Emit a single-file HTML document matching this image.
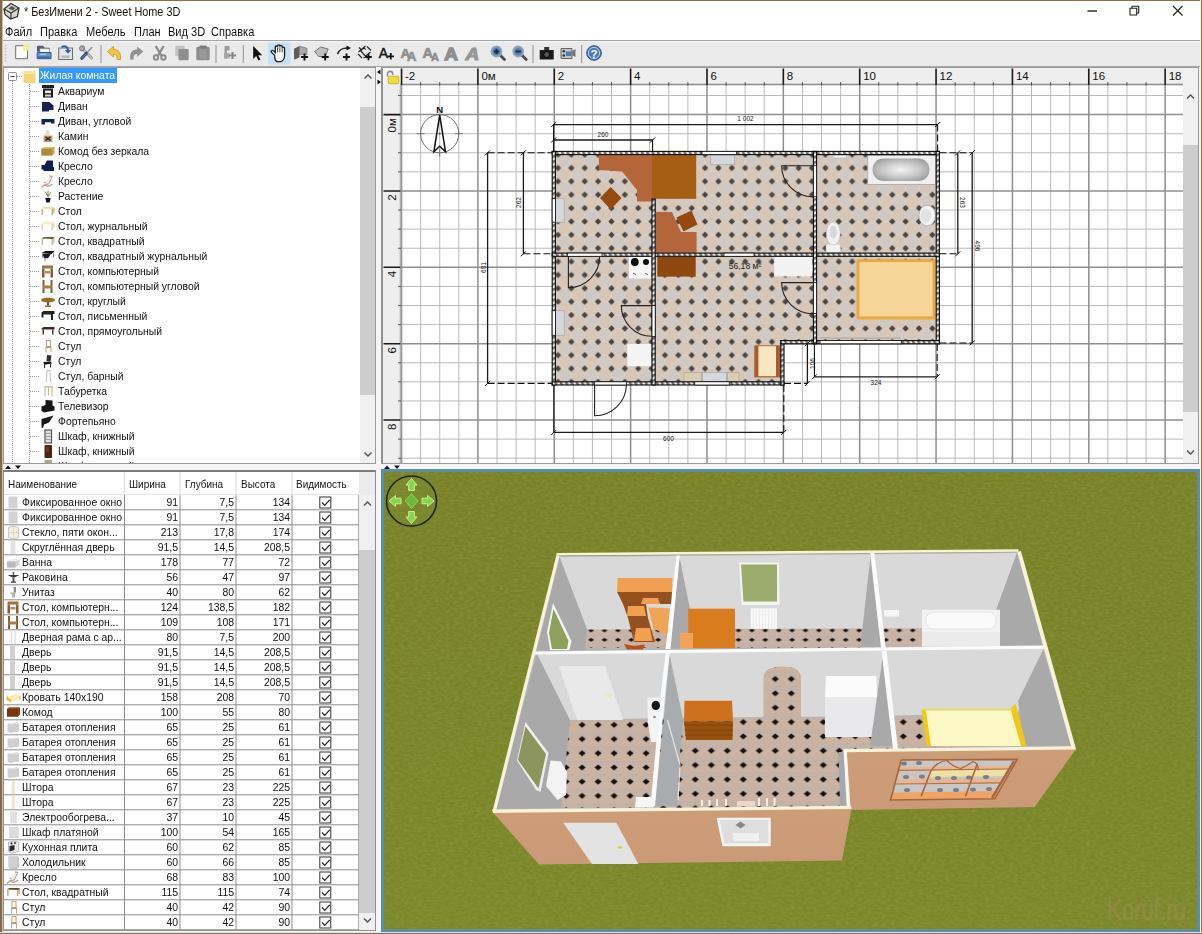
<!DOCTYPE html>
<html lang="ru"><head><meta charset="utf-8"><title>* БезИмени 2 - Sweet Home 3D</title>
<style>

html,body{margin:0;padding:0;}
body{width:1202px;height:934px;overflow:hidden;background:#f0f0f0;font-family:"Liberation Sans",sans-serif;font-size:11px;color:#000;}
#win{position:absolute;left:0;top:0;width:1202px;height:934px;overflow:hidden;background:#f5f5f5;}
.abs{position:absolute;}
#titlebar{position:absolute;left:0;top:0;width:1202px;height:22px;background:#fff;}
#title{position:absolute;left:24px;top:4px;font-size:12px;line-height:16px;white-space:nowrap;color:#111;transform:scaleX(.905);transform-origin:0 0;}
#menubar{position:absolute;left:0;top:22px;width:1202px;height:18px;background:#fff;}
#menubar span{position:absolute;top:2px;font-size:12px;line-height:16px;white-space:nowrap;color:#111;transform:scaleX(.92);transform-origin:0 0;}
#toolbar{position:absolute;left:0;top:40px;width:1202px;height:27px;background:#eaeaea;border-top:1px solid #a4a4a4;box-sizing:border-box;box-shadow:inset 0 1px 0 #f6f6f6;}
#tbsvg{position:absolute;left:0;top:41px;}
#tbsvg text{font-family:"Liberation Sans",sans-serif;}

#tree{position:absolute;left:3px;top:67px;width:373px;height:397px;background:#fff;border:1px solid #9a9a9a;box-sizing:border-box;overflow:hidden;}
.trow{position:absolute;left:54px;height:15px;line-height:15px;font-size:11px;white-space:nowrap;color:#111;transform:scaleX(.945);transform-origin:0 0;}
#tsel{position:absolute;left:35px;top:0px;width:78px;height:15px;background:#3399ff;}
#tselt{position:absolute;left:36px;top:0px;height:15px;color:#fff;line-height:15px;font-size:11px;white-space:nowrap;transform:scaleX(.945);transform-origin:0 0;}
#tsb{position:absolute;left:356px;top:0;width:16px;height:395px;background:#f0f0f0;}
#tsbthumb{position:absolute;left:0;top:39px;width:16px;height:288px;background:#cdcdcd;}
#treesvg{position:absolute;left:0;top:0;}

#tbl{position:absolute;left:3px;top:470px;width:373px;height:461px;background:#fff;border:1px solid #8e8e8e;border-top:2px solid #7c7c7c;box-sizing:border-box;overflow:hidden;}
#tblsvg{position:absolute;left:0;top:-1px;}
.th{position:absolute;top:5px;height:15px;line-height:15px;font-size:11px;white-space:nowrap;color:#111;transform:scaleX(.905);transform-origin:0 0;}
.tn{position:absolute;left:18px;height:15px;line-height:15px;font-size:11px;white-space:nowrap;color:#111;transform:scaleX(.945);transform-origin:0 0;}
.tv{position:absolute;height:15px;line-height:15px;font-size:11px;white-space:nowrap;color:#111;text-align:right;width:54px;transform:scaleX(.945);transform-origin:100% 0;}
#tbsb{position:absolute;left:355px;top:23px;width:17px;height:436px;background:#f0f0f0;}
#tbcorner{position:absolute;left:355px;top:0;width:17px;height:23px;background:#ececec;}
#tbsbthumb{position:absolute;left:0;top:55px;width:17px;height:363px;background:#cdcdcd;}

#plan{position:absolute;left:381px;top:67px;width:818px;height:397px;background:#fff;border:1px solid #9a9a9a;border-left:2px solid #909090;box-sizing:border-box;overflow:hidden;}
#plansvg{position:absolute;left:0;top:0;}
#plansvg text{font-family:"Liberation Sans",sans-serif;}

#v3d{position:absolute;left:381px;top:469px;width:819px;height:463px;background:#7d8a2a;overflow:hidden;}
#v3dsvg{position:absolute;left:0;top:0;}
#v3dsvg text{font-family:"Liberation Sans",sans-serif;}

</style></head>
<body>
<div id="win">
<div id="titlebar"><div id="title">* БезИмени 2 - Sweet Home 3D</div></div>
<svg class="abs" style="left:0;top:0" width="1202" height="22" viewBox="0 0 1202 22"><path d="M4 9l7-5.5 8 4.5-1.5 8.5-7 2.5-5.5-4.5z" fill="#d8d8d0" stroke="#333" stroke-width="1.3"/><path d="M4 9l7 4 8-5M11 13v6" stroke="#333" stroke-width="1.2" fill="none"/><path d="M11.5 6l4 2-3 2.5-4-2z" fill="#555"/><path d="M1087.5 11h9.5" stroke="#222" stroke-width="1.4"/><path d="M1130 8.3h6.7v6.7h-6.7zM1132 8.3v-2h6.7v6.7h-2" stroke="#222" stroke-width="1.1" fill="none"/><path d="M1173 6l9.5 9.5M1182.5 6l-9.5 9.5" stroke="#222" stroke-width="1.2" fill="none"/></svg>
<div id="menubar"><span style="left:5px">Файл</span><span style="left:40px">Правка</span><span style="left:86px">Мебель</span><span style="left:134px">План</span><span style="left:168px">Вид 3D</span><span style="left:211px">Справка</span></div>
<div id="toolbar"></div>
<svg id="tbsvg" width="1202" height="26" viewBox="0 0 1202 26"><g transform="translate(13.7 4)"><path d="M2 0.7h11.8v13h-11.8z" fill="#fdfdfd" stroke="#6e6e6e" stroke-width="1"/><path d="M9.5 0h5.3v5.5h-5.3z" fill="#f7ea78"/><path d="M12 0.3v5M9.7 2.7h5" stroke="#fbf6b0" stroke-width="1"/></g><g transform="translate(36 4)"><path d="M1.5 1.2h5.5l1.5 2h5v3h-12z" fill="#56627c" stroke="#3c4860" stroke-width="0.8"/><path d="M4 3.8h9.5v5h-9.5z" fill="#f8f8f8" stroke="#9aa" stroke-width="0.5"/><path d="M1.2 7.5h13.8v6.2h-13.8z" fill="#6b98d0" stroke="#35588c" stroke-width="1"/><path d="M1.7 11.3h12.8v2h-12.8z" fill="#3f6aa6"/><path d="M4 9.3h6" stroke="#c4d8f0" stroke-width="1"/></g><g transform="translate(57.5 4)"><path d="M1.2 3h13.8v11.5h-13.8z" fill="#e2e6ea" stroke="#6a7078" stroke-width="1.1"/><path d="M4 10.5h8v2.5h-8z" fill="#b4b8bc"/><path d="M4 2c3.5-1.8 6.5-0.5 6.5 3.5" stroke="#2c5c94" stroke-width="1.9" fill="none"/><path d="M7.3 5h6.4l-3.2 3.8z" fill="#2c5c94"/></g><g transform="translate(78.7 4)"><path d="M3.5 3.5l9.5 9.5" stroke="#8c8c8c" stroke-width="2.6" stroke-linecap="round"/><path d="M3.5 3.5l9.5 9.5" stroke="#c8c8c8" stroke-width="1.1" stroke-linecap="round"/><circle cx="3.3" cy="3.3" r="2.3" fill="none" stroke="#8a8a8a" stroke-width="1.5"/><path d="M13.5 2l-6 6.5" stroke="#9a9a9a" stroke-width="1.7"/><path d="M7.5 8.5l-4.3 4.7" stroke="#2c4a78" stroke-width="3.2" stroke-linecap="round"/><path d="M7 9.2l-3.5 3.8" stroke="#5a82b8" stroke-width="1.1" stroke-linecap="round"/></g><g transform="translate(106 4)"><path d="M1.5 6.5l6-5v3c4.5 0 7 2.5 7 7.5v2.5h-3.5c0.5-3.5-0.5-5.5-3.5-5.5v3z" fill="#f3c642" stroke="#cf9f1c" stroke-width="0.9"/></g><g transform="translate(128.7 4)"><path d="M14.5 6.5l-6-5v3c-4.5 0-7 2.5-7 7.5v2.5h3.5c-0.5-3.5 0.5-5.5 3.5-5.5v3z" fill="#909090"/></g><g transform="translate(151.7 4)"><path d="M4 1l5.7 9.5M12 1l-5.7 9.5" stroke="#8a8a8a" stroke-width="2.3" fill="none"/><circle cx="4.3" cy="12.5" r="2.2" fill="none" stroke="#8a8a8a" stroke-width="1.9"/><circle cx="11.7" cy="12.5" r="2.2" fill="none" stroke="#8a8a8a" stroke-width="1.9"/></g><g transform="translate(173.7 4)"><rect x="1.5" y="0.8" width="9.5" height="10.5" rx="1.2" fill="#c2c2c2"/><rect x="4.8" y="4" width="10.2" height="11.2" rx="1.2" fill="#8e8e8e"/></g><g transform="translate(195 4)"><rect x="1.3" y="1.8" width="13.4" height="13.4" rx="1.5" fill="#8e8e8e"/><rect x="4.5" y="0.5" width="7" height="3" rx="1" fill="#7c7c7c"/><rect x="4.5" y="4.5" width="7" height="9" fill="#999"/></g><g transform="translate(221 4)"><path d="M3.5 1h5v4.5h-2.5v8h-2.5z" fill="#9c9c9c"/><path d="M3 8h5.5v5.5h-5.5z" fill="#a8a8a8"/><path d="M7.9 10.5h7.2M11.5 6.9v7.2" stroke="#888" stroke-width="2.2" fill="none"/></g><g transform="translate(248.7 4)"><path d="M4.5 1v13l3-3 2.2 4.5 2-1-2.2-4.3h4z" fill="#111"/></g><rect x="268" y="1.5" width="22.5" height="22" fill="#c6e0f5"/><g transform="translate(271 4)"><g transform="translate(-2.2 -1.3) scale(1.22 1.15)"><path d="M4.8 10.2l-2.6-2.7c-0.9-1.1 0.6-2.3 1.6-1.3l1.5 1.5v-4.7c0-1.4 1.9-1.4 1.9 0v-1c0-1.4 1.9-1.4 1.9 0v0.6c0-1.4 1.9-1.4 1.9 0v1.3c0-1.3 1.9-1.3 1.9 0v6c0 3.3-1.4 5.6-3.2 5.6h-2.7c-1.6 0-2.2-2.6-2.2-5.3z" fill="#fff" stroke="#1c1c1c" stroke-width="1.1"/><path d="M7.2 3.5v4M9.1 3v4.5M11 4v3.5" stroke="#1c1c1c" stroke-width="0.7"/></g></g><g transform="translate(293 4)"><path d="M1 3.8l5.5-2.8v11.5l-5.5 2.3z" fill="#5c5c5c"/><path d="M6.5 1l7.5 2.3v6.2h-7.5z" fill="#a8a8a8" stroke="#666" stroke-width="0.6"/><path d="M8 12h7M11.5 8.5v7" stroke="#111" stroke-width="1.9" fill="none"/></g><g transform="translate(313.7 4)"><path d="M1 6.5l6-4.5 7.5 2-3 7.5h-6.5z" fill="#c0c0c0" stroke="#777" stroke-width="1"/><path d="M8 12h7M11.5 8.5v7" stroke="#111" stroke-width="1.9" fill="none"/></g><g transform="translate(336 4)"><path d="M1.5 9c2-5 5-6 10-6" stroke="#222" stroke-width="1.7" fill="none"/><path d="M10.5 0.5l4.5 2.5-4.5 2.5z" fill="#111"/><path d="M7 12h7M10.5 8.5v7" stroke="#111" stroke-width="1.9" fill="none"/></g><g transform="translate(357 4)"><path d="M1.5 7l7-6M6.5 13l7-6M3 5l7 8M2 2.5l3 3M10 1.5l4 4M1 9l4 4M5.5 4.5l1.5-2 1.5 2" stroke="#2a2a2a" stroke-width="1.2" fill="none"/><path d="M8.2 12h6.6M11.5 8.7v6.6" stroke="#111" stroke-width="1.8" fill="none"/></g><text x="378.8" y="17.3" font-size="14" fill="#111" stroke="#111" stroke-width="0.45">A</text><path d="M387.6 15.3h6.4M390.8 12.100000000000001v6.4" stroke="#111" stroke-width="1.8" fill="none"/><text x="400.5" y="16.5" font-size="13.5" font-weight="bold" fill="#8e8e8e" stroke="#8e8e8e" stroke-width="0.7">A</text><text x="407" y="20" font-size="13" font-weight="bold" fill="#8e8e8e" stroke="#8e8e8e" stroke-width="0.6">A</text><text x="422.5" y="16.5" font-size="14.5" font-weight="bold" fill="#8e8e8e" stroke="#8e8e8e" stroke-width="0.7">A</text><text x="431" y="20" font-size="11" font-weight="bold" fill="#8e8e8e" stroke="#8e8e8e" stroke-width="0.5">A</text><text transform="translate(444.3 18.5) scale(1.15 1)" font-size="16.5" font-weight="bold" fill="#8e8e8e" stroke="#8e8e8e" stroke-width="1.3">A</text><text transform="translate(465.5 18.5) scale(1.15 1)" font-size="16.5" font-weight="bold" font-style="italic" fill="#969696" stroke="#969696" stroke-width="1.1">A</text><g transform="translate(490 4)"><path d="M9.5 9.5l5 5" stroke="#4a4a4a" stroke-width="2.8" stroke-linecap="round"/><circle cx="6.5" cy="6.5" r="5.2" fill="#7d97b8" stroke="#8ea6c2" stroke-width="1.4"/><circle cx="6.5" cy="6.5" r="3.6" fill="#5c7ba4"/><path d="M4 6.5h5" stroke="#142c50" stroke-width="1.9"/><path d="M6.5 4v5" stroke="#142c50" stroke-width="1.9"/></g><g transform="translate(511.70000000000005 4)"><path d="M9.5 9.5l5 5" stroke="#4a4a4a" stroke-width="2.8" stroke-linecap="round"/><circle cx="6.5" cy="6.5" r="5.2" fill="#7d97b8" stroke="#8ea6c2" stroke-width="1.4"/><circle cx="6.5" cy="6.5" r="3.6" fill="#5c7ba4"/><path d="M4 6.5h5" stroke="#142c50" stroke-width="1.9"/></g><g transform="translate(538.7 4)"><path d="M1 5h14v9.5h-14z" fill="#1c1c1c"/><path d="M5.5 2h5v3h-5z" fill="#333"/><circle cx="8" cy="9.5" r="3" fill="#555" stroke="#000" stroke-width="1"/></g><g transform="translate(560 4)"><path d="M1 3.5h11v10h-11z" fill="#c0c4c0" stroke="#666" stroke-width="1"/><path d="M12 6l3.5-2v8l-3.5-2z" fill="#777"/><rect x="6" y="6.5" width="5.5" height="4.5" fill="#4c7cb4"/><circle cx="3.8" cy="6.3" r="1.3" fill="#333"/><circle cx="3.8" cy="10.5" r="1.3" fill="#333"/></g><g transform="translate(586 4)"><circle cx="8" cy="8" r="7.3" fill="#4a7ab4" stroke="#2c5488" stroke-width="1"/><circle cx="8" cy="8" r="5.6" fill="none" stroke="#dce8f4" stroke-width="0.8"/></g><text x="594" y="16.5" font-size="11.5" font-weight="bold" fill="#fff" text-anchor="middle">?</text><path d="M101 4v18" stroke="#909090" stroke-width="1"/><path d="M216 4v18" stroke="#909090" stroke-width="1"/><path d="M243.3 4v18" stroke="#909090" stroke-width="1"/><path d="M533 4v18" stroke="#909090" stroke-width="1"/><path d="M581.7 4v18" stroke="#909090" stroke-width="1"/><path d="M5.5 4v18" stroke="#c4c4c4" stroke-width="1.5" stroke-dasharray="1.5 1.5"/></svg>
<div class="abs" style="left:3px;top:66px;width:1197px;height:1px;background:#a8a8a8"></div>
<svg class="abs" style="left:376px;top:68px" width="6" height="20"><path d="M4.5 1.5v5l-3.5-2.5zM1.5 11.5v5l3.5-2.5z" fill="#111"/></svg>
<svg class="abs" style="left:4px;top:464px" width="20" height="6"><path d="M1 5h6l-3-3.5zM11 1.5h6l-3 3.5z" fill="#111"/></svg>
<svg class="abs" style="left:383px;top:464px" width="20" height="6"><path d="M1 5h6l-3-3.5zM11 1.5h6l-3 3.5z" fill="#111"/></svg>
<div class="abs" style="left:0;top:0;width:1202px;height:1px;background:#8e6f44"></div>
<div class="abs" style="left:0;top:0;width:2px;height:934px;background:#86694a"></div>
<div class="abs" style="left:2px;top:1px;width:1px;height:933px;background:#c9bfb2"></div>
<div class="abs" style="left:1200px;top:0;width:1px;height:934px;background:#f6efe0"></div>
<div class="abs" style="left:1201px;top:0;width:1px;height:934px;background:#96784e"></div>
<div class="abs" style="left:0;top:932px;width:1202px;height:1px;background:#e6e2da"></div>
<div class="abs" style="left:0;top:933px;width:1202px;height:1px;background:#7f7262"></div><div id="tree">
<svg id="treesvg" width="356" height="395" viewBox="0 0 356 395"><path d="M8.5 13V395M25.5 16V395" stroke="#9a9a9a" stroke-width="1" stroke-dasharray="1 1" fill="none"/><path d="M13 8.5H19M26 23.5H36M26 38.5H36M26 53.5H36M26 68.5H36M26 83.5H36M26 98.5H36M26 113.5H36M26 128.5H36M26 143.5H36M26 158.5H36M26 173.5H36M26 188.5H36M26 203.5H36M26 218.5H36M26 233.5H36M26 248.5H36M26 263.5H36M26 278.5H36M26 293.5H36M26 308.5H36M26 323.5H36M26 338.5H36M26 353.5H36M26 368.5H36M26 383.5H36M26 398.5H36" stroke="#9a9a9a" stroke-width="1" stroke-dasharray="1 1" fill="none"/><rect x="4.5" y="4.5" width="8" height="8" rx="1" fill="#fff" stroke="#919191" stroke-width="1"/><path d="M6.5 8.5h4" stroke="#444" stroke-width="1"/><path d="M19.5 3h12v12h-12z" fill="#f3d67a"/><path d="M19.5 3h12v3h-12z" fill="#f8e6a0"/><g transform="translate(37 16.5)"><rect x="1" y="0.5" width="12" height="3" fill="#222"/><rect x="2" y="4" width="10" height="9" fill="#1c1c1c"/><rect x="4" y="6" width="6" height="2.6" fill="#e8e8e8"/><rect x="4" y="10" width="6" height="2" fill="#d8d8d8"/></g><g transform="translate(37 31.5)"><path d="M1 2.5h7.5l4 3.5v4.5h-4.5v1.5h-7z" fill="#1a2150"/></g><g transform="translate(37 46.5)"><path d="M0.5 4.5h13v4.5h-3.5v-1.2h-6v2.2h-3.5z" fill="#1a2150"/></g><g transform="translate(37 61.5)"><path d="M5 0.5h3l1 5h-5z" fill="#e6dcc8"/><path d="M2.5 6h9v6.5h-9z" fill="#b9a57c"/><path d="M4.5 7.5l5 3.5M9.5 7.5l-5 3.5" stroke="#3c3424" stroke-width="1.6"/></g><g transform="translate(37 76.5)"><path d="M0.5 4l3-1.5h10v6.5l-2.5 2h-10.5z" fill="#c9a24c"/><path d="M0.5 4h10.5v7h-10.5z" fill="#b08a38"/><path d="M0.5 4l3-1.5h10l-2.5 1.5z" fill="#e2c070"/></g><g transform="translate(37 91.5)"><path d="M6 1h6v6.5h1v4h-10.5v-1.5h-2v-4.5h3z" fill="#141c54"/></g><g transform="translate(37 106.5)"><path d="M8.5 1.5l2.5 0.5-3.5 7.5-4.5 1-2.5 2.5M3 10.5c3 2 6 1.5 8.5-1M3 7.5l4.5 2" stroke="#b8a094" stroke-width="1.3" fill="none"/><path d="M8.5 2l2 0.5-3 6.5-3.5 0.5z" fill="#f0e8e4"/></g><g transform="translate(37 121.5)"><path d="M7 8V1M7 6L4 2M7 6l3-3.5M7 7L5.2 4.5M7 7l2-2" stroke="#7a8a5a" stroke-width="0.9" fill="none"/><path d="M4.3 8.5h5.4l-1 4.5h-3.4z" fill="#151515"/></g><g transform="translate(37 136.5)"><path d="M0 4L3 2.5H13.5L12 4.5Z" fill="#e8d9a8"/><path d="M0.5 4.5h1.6v6h-1.6zM10.5 4.5h1.6v6h-1.6zM12.3 3.5h1.2v5h-1.2z" fill="#c8b070"/></g><g transform="translate(37 151.5)"><path d="M0 4L3 2.5H13.5L12 4.5Z" fill="#f2ecc8"/><path d="M0.5 4.5h1.6v6h-1.6zM10.5 4.5h1.6v6h-1.6zM12.3 3.5h1.2v5h-1.2z" fill="#e0d8a8"/></g><g transform="translate(37 166.5)"><path d="M0 4L3 2.5H13.5L12 4.5Z" fill="#6a5a3a"/><path d="M0.5 4.5h1.6v6h-1.6zM10.5 4.5h1.6v6h-1.6zM12.3 3.5h1.2v5h-1.2z" fill="#cdbf98"/></g><g transform="translate(37 181.5)"><path d="M0.5 3.5l4-2h9l-3 3z" fill="#111"/><path d="M1.5 4.2h8.5l-3 4.5h-4z" fill="#1a1a1a"/><path d="M1.5 4v4M12.5 3v5M4 9v3" stroke="#888" stroke-width="1"/></g><g transform="translate(37 196.5)"><path d="M1 1h11v3h-11z" fill="#9a6e40"/><path d="M1 4h2.5v9h-2.5zM9.5 4h2.5v9h-2.5z" fill="#8a5c30"/><path d="M4 6.5h5v2.5h-5z" fill="#b0895c"/></g><g transform="translate(37 211.5)"><path d="M1.5 0.5h2v13h-2zM9.5 0.5h2v13h-2z" fill="#8a5c30"/><path d="M2 6h8.5v3h-8.5z" fill="#a87c48"/></g><g transform="translate(37 226.5)"><ellipse cx="7" cy="5.5" rx="7" ry="2.3" fill="#9a6a20"/><path d="M6 7.5h2v3.5h-2z" fill="#7a5218"/><path d="M4 11h6v1.3h-6z" fill="#7a5218"/></g><g transform="translate(37 241.5)"><path d="M0.5 3l2-1.5h11v3h-1.5v6h-2v-5.5h-7.5v3h-2z" fill="#222418"/></g><g transform="translate(37 256.5)"><path d="M0.5 4l2-1.5h11v2.5h-13z" fill="#3a2a20"/><path d="M1.5 5h1.5v5h-1.5zM11 5h1.5v5h-1.5z" fill="#4a382c"/></g><g transform="translate(37 271.5)"><path d="M5.5 1h4v6h-4z" fill="none" stroke="#c4a484" stroke-width="1.1"/><path d="M4.5 7h6v1.6h-6z" fill="#b89878"/><path d="M5 8.5v4.5M10 8.5v4.5" stroke="#c4a484" stroke-width="1"/></g><g transform="translate(37 286.5)"><path d="M6 0.5l4.5 0.5-1 6-4-0.5z" fill="#3a2c34"/><path d="M2.5 7.5l7.5-0.5 1 2-8 1.2z" fill="#141018"/><path d="M3.5 10v3.5M9.5 9.5v3.5" stroke="#2a2028" stroke-width="1.1"/></g><g transform="translate(37 301.5)"><path d="M5.5 0.5h4v1.5h-4z" fill="#d0d0d0"/><path d="M6 2l-0.7 11M9 2l0.7 11" stroke="#c4c4c0" stroke-width="1.1"/></g><g transform="translate(37 316.5)"><path d="M3 1.5h9v1.8h-9z" fill="#d8c8a8"/><path d="M4 3v9M7.5 3v8M11 3v9" stroke="#c8b898" stroke-width="1.1"/></g><g transform="translate(37 331.5)"><path d="M4.5 0.5l7 0.5v5l2 1v4l-10.5 2-2.5-1.5v-4.5l4-1.5z" fill="#151515"/></g><g transform="translate(37 346.5)"><path d="M0.5 4.5l12-3.5-4.5 7-5 2 -1 3.5-1.5-0.5z" fill="#181818"/></g><g transform="translate(37 361.5)"><rect x="4" y="0.5" width="6.5" height="13" fill="#e0e0e0" stroke="#555" stroke-width="1.2"/><path d="M5 4h4.5M5 7h4.5M5 10h4.5" stroke="#888" stroke-width="0.8"/></g><g transform="translate(37 376.5)"><rect x="3.5" y="0.5" width="7.5" height="13" rx="1" fill="#4a2414"/><rect x="5" y="2.5" width="3" height="5" fill="#6a3820"/></g><g transform="translate(37 391.5)"><rect x="3.5" y="0.5" width="7.5" height="13" fill="#b0a888"/></g></svg>
<div id="tsel"></div><div id="tselt">Жилая комната</div>
<div class="trow" style="top:16px">Аквариум</div>
<div class="trow" style="top:31px">Диван</div>
<div class="trow" style="top:46px">Диван, угловой</div>
<div class="trow" style="top:61px">Камин</div>
<div class="trow" style="top:76px">Комод без зеркала</div>
<div class="trow" style="top:91px">Кресло</div>
<div class="trow" style="top:106px">Кресло</div>
<div class="trow" style="top:121px">Растение</div>
<div class="trow" style="top:136px">Стол</div>
<div class="trow" style="top:151px">Стол, журнальный</div>
<div class="trow" style="top:166px">Стол, квадратный</div>
<div class="trow" style="top:181px">Стол, квадратный журнальный</div>
<div class="trow" style="top:196px">Стол, компьютерный</div>
<div class="trow" style="top:211px">Стол, компьютерный угловой</div>
<div class="trow" style="top:226px">Стол, круглый</div>
<div class="trow" style="top:241px">Стол, письменный</div>
<div class="trow" style="top:256px">Стол, прямоугольный</div>
<div class="trow" style="top:271px">Стул</div>
<div class="trow" style="top:286px">Стул</div>
<div class="trow" style="top:301px">Стул, барный</div>
<div class="trow" style="top:316px">Табуретка</div>
<div class="trow" style="top:331px">Телевизор</div>
<div class="trow" style="top:346px">Фортепьяно</div>
<div class="trow" style="top:361px">Шкаф, книжный</div>
<div class="trow" style="top:376px">Шкаф, книжный</div>
<div class="trow" style="top:391px">Шкаф, книжный</div>
<div id="tsb"><div id="tsbthumb"></div><svg class="abs" style="left:0;top:0" width="16" height="395"><path d="M4.5 10.5l3.5-3.5 3.5 3.5" stroke="#505050" stroke-width="1.4" fill="none"/><path d="M4.5 384.5l3.5 3.5 3.5-3.5" stroke="#505050" stroke-width="1.4" fill="none"/></svg></div>
</div><div id="tbl">
<svg id="tblsvg" width="371" height="460" viewBox="0 0 371 460"><path d="M120.5 1V23.5M176 1V23.5M232 1V23.5M288 1V23.5" stroke="#dcdcdc" stroke-width="1.2" fill="none"/><path d="M0 23.5H355" stroke="#e4e4e4" stroke-width="1" fill="none"/><path d="M0 38.8H355M0 53.8H355M0 68.8H355M0 83.8H355M0 98.8H355M0 113.8H355M0 128.8H355M0 143.8H355M0 158.8H355M0 173.8H355M0 188.8H355M0 203.8H355M0 218.8H355M0 233.8H355M0 248.8H355M0 263.8H355M0 278.8H355M0 293.8H355M0 308.8H355M0 323.8H355M0 338.8H355M0 353.8H355M0 368.8H355M0 383.8H355M0 398.8H355M0 413.8H355M0 428.8H355M0 443.8H355M0 458.8H355M120.5 24V460M176 24V460M232 24V460M288 24V460M354.8 24V460" stroke="#8c8c8c" stroke-width="1" fill="none"/><g transform="translate(2.5 24.5)"><rect x="2" y="1" width="9" height="12" fill="#d2d2d2"/></g><rect x="315.8" y="26" width="11" height="11" fill="#fff" stroke="#333" stroke-width="1"/><path d="M318 31.5l2.7 2.8 5-5.5" stroke="#222" stroke-width="1.2" fill="none"/><g transform="translate(2.5 39.5)"><rect x="2" y="1" width="9" height="12" fill="#d2d2d2"/></g><rect x="315.8" y="41" width="11" height="11" fill="#fff" stroke="#333" stroke-width="1"/><path d="M318 46.5l2.7 2.8 5-5.5" stroke="#222" stroke-width="1.2" fill="none"/><g transform="translate(2.5 54.5)"><path d="M2 2l5-1.5 5 1.5v10l-5 1.5-5-1.5z" fill="#f4eee8" stroke="#c8b8a8" stroke-width="0.8"/><path d="M7 0.5v13M2 7h10" stroke="#d8c8b8" stroke-width="0.7"/></g><rect x="315.8" y="56" width="11" height="11" fill="#fff" stroke="#333" stroke-width="1"/><path d="M318 61.5l2.7 2.8 5-5.5" stroke="#222" stroke-width="1.2" fill="none"/><g transform="translate(2.5 69.5)"><rect x="4" y="0.5" width="5" height="13" fill="#e2e2e2"/></g><rect x="315.8" y="71" width="11" height="11" fill="#fff" stroke="#333" stroke-width="1"/><path d="M318 76.5l2.7 2.8 5-5.5" stroke="#222" stroke-width="1.2" fill="none"/><g transform="translate(2.5 84.5)"><path d="M0.5 6l4-2h8.5v5l-4 3h-8.5z" fill="#d4d4d4"/><path d="M0.5 6l4-2h8.5l-4 2z" fill="#f0f0f0"/><path d="M0.5 6h8.5v6h-8.5z" fill="#bcbcbc"/></g><rect x="315.8" y="86" width="11" height="11" fill="#fff" stroke="#333" stroke-width="1"/><path d="M318 91.5l2.7 2.8 5-5.5" stroke="#222" stroke-width="1.2" fill="none"/><g transform="translate(2.5 99.5)"><path d="M1 4.5h12l-5 2.5h-2z" fill="#3a3a3a"/><path d="M6.3 1.5h1.4v3h-1.4zM6 7h2v4.5h-2z" fill="#555"/><path d="M4.5 11h5v1.3h-5z" fill="#444"/></g><rect x="315.8" y="101" width="11" height="11" fill="#fff" stroke="#333" stroke-width="1"/><path d="M318 106.5l2.7 2.8 5-5.5" stroke="#222" stroke-width="1.2" fill="none"/><g transform="translate(2.5 114.5)"><path d="M7 1.5h2.5v6l-1 1v3.5h-3v-3l-1.5-0.5v-1.5h3z" fill="#b4b4b4"/><path d="M7.5 1.5h2v5h-2z" fill="#8c8c8c"/></g><rect x="315.8" y="116" width="11" height="11" fill="#fff" stroke="#333" stroke-width="1"/><path d="M318 121.5l2.7 2.8 5-5.5" stroke="#222" stroke-width="1.2" fill="none"/><g transform="translate(2.5 129.5)"><path d="M1 1h11v3h-11z" fill="#9a6e40"/><path d="M1 4h2.5v9h-2.5zM9.5 4h2.5v9h-2.5z" fill="#8a5c30"/><path d="M4 6.5h5v2.5h-5z" fill="#b0895c"/></g><rect x="315.8" y="131" width="11" height="11" fill="#fff" stroke="#333" stroke-width="1"/><path d="M318 136.5l2.7 2.8 5-5.5" stroke="#222" stroke-width="1.2" fill="none"/><g transform="translate(2.5 144.5)"><path d="M1.5 0.5h2v13h-2zM9.5 0.5h2v13h-2z" fill="#8a5c30"/><path d="M2 6h8.5v3h-8.5z" fill="#a87c48"/></g><rect x="315.8" y="146" width="11" height="11" fill="#fff" stroke="#333" stroke-width="1"/><path d="M318 151.5l2.7 2.8 5-5.5" stroke="#222" stroke-width="1.2" fill="none"/><g transform="translate(2.5 159.5)"><path d="M5 0.5v13M8.5 0.5v13" stroke="#e0e0e0" stroke-width="1.4"/></g><rect x="315.8" y="161" width="11" height="11" fill="#fff" stroke="#333" stroke-width="1"/><path d="M318 166.5l2.7 2.8 5-5.5" stroke="#222" stroke-width="1.2" fill="none"/><g transform="translate(2.5 174.5)"><rect x="3.5" y="0.5" width="5" height="13" fill="#d0d0d0"/></g><rect x="315.8" y="176" width="11" height="11" fill="#fff" stroke="#333" stroke-width="1"/><path d="M318 181.5l2.7 2.8 5-5.5" stroke="#222" stroke-width="1.2" fill="none"/><g transform="translate(2.5 189.5)"><rect x="3.5" y="0.5" width="5" height="13" fill="#d0d0d0"/></g><rect x="315.8" y="191" width="11" height="11" fill="#fff" stroke="#333" stroke-width="1"/><path d="M318 196.5l2.7 2.8 5-5.5" stroke="#222" stroke-width="1.2" fill="none"/><g transform="translate(2.5 204.5)"><rect x="3.5" y="0.5" width="5" height="13" fill="#d0d0d0"/></g><rect x="315.8" y="206" width="11" height="11" fill="#fff" stroke="#333" stroke-width="1"/><path d="M318 211.5l2.7 2.8 5-5.5" stroke="#222" stroke-width="1.2" fill="none"/><g transform="translate(2.5 219.5)"><path d="M0.5 6.5l9-3 4 2.5v2.5l-9 3-4-2.5z" fill="#f4ecb8"/><path d="M0.5 6.5v3l4 2.5v-3z" fill="#e0c440"/><path d="M0.5 5v5M13.5 5v4" stroke="#d8b830" stroke-width="1"/></g><rect x="315.8" y="221" width="11" height="11" fill="#fff" stroke="#333" stroke-width="1"/><path d="M318 226.5l2.7 2.8 5-5.5" stroke="#222" stroke-width="1.2" fill="none"/><g transform="translate(2.5 234.5)"><path d="M0.5 3.5l2-1.5h11v7l-2 2h-11z" fill="#8a3c14"/><path d="M0.5 3.5h11v7.5h-11z" fill="#7a3410"/><path d="M0.5 3.5l2-1.5h11l-2 1.5z" fill="#a04c20"/></g><rect x="315.8" y="236" width="11" height="11" fill="#fff" stroke="#333" stroke-width="1"/><path d="M318 241.5l2.7 2.8 5-5.5" stroke="#222" stroke-width="1.2" fill="none"/><g transform="translate(2.5 249.5)"><path d="M1 3l9.5-1 2 1v8l-9.5 1.5-2-1.5z" fill="#cfcfcf"/><path d="M1 3l9.5-1 2 1-9.5 1z" fill="#e4e4e4"/></g><rect x="315.8" y="251" width="11" height="11" fill="#fff" stroke="#333" stroke-width="1"/><path d="M318 256.5l2.7 2.8 5-5.5" stroke="#222" stroke-width="1.2" fill="none"/><g transform="translate(2.5 264.5)"><path d="M1 3l9.5-1 2 1v8l-9.5 1.5-2-1.5z" fill="#cfcfcf"/><path d="M1 3l9.5-1 2 1-9.5 1z" fill="#e4e4e4"/></g><rect x="315.8" y="266" width="11" height="11" fill="#fff" stroke="#333" stroke-width="1"/><path d="M318 271.5l2.7 2.8 5-5.5" stroke="#222" stroke-width="1.2" fill="none"/><g transform="translate(2.5 279.5)"><path d="M1 3l9.5-1 2 1v8l-9.5 1.5-2-1.5z" fill="#cfcfcf"/><path d="M1 3l9.5-1 2 1-9.5 1z" fill="#e4e4e4"/></g><rect x="315.8" y="281" width="11" height="11" fill="#fff" stroke="#333" stroke-width="1"/><path d="M318 286.5l2.7 2.8 5-5.5" stroke="#222" stroke-width="1.2" fill="none"/><g transform="translate(2.5 294.5)"><path d="M1 3l9.5-1 2 1v8l-9.5 1.5-2-1.5z" fill="#cfcfcf"/><path d="M1 3l9.5-1 2 1-9.5 1z" fill="#e4e4e4"/></g><rect x="315.8" y="296" width="11" height="11" fill="#fff" stroke="#333" stroke-width="1"/><path d="M318 301.5l2.7 2.8 5-5.5" stroke="#222" stroke-width="1.2" fill="none"/><g transform="translate(2.5 309.5)"><path d="M5.5 0.5h2.5l0.5 13h-3.5z" fill="#efe6c8"/></g><rect x="315.8" y="311" width="11" height="11" fill="#fff" stroke="#333" stroke-width="1"/><path d="M318 316.5l2.7 2.8 5-5.5" stroke="#222" stroke-width="1.2" fill="none"/><g transform="translate(2.5 324.5)"><path d="M5.5 0.5h2.5l0.5 13h-3.5z" fill="#efe6c8"/></g><rect x="315.8" y="326" width="11" height="11" fill="#fff" stroke="#333" stroke-width="1"/><path d="M318 331.5l2.7 2.8 5-5.5" stroke="#222" stroke-width="1.2" fill="none"/><g transform="translate(2.5 339.5)"><rect x="3.5" y="1" width="7" height="12" fill="#e6e6e6"/><path d="M5 2v10M7 2v10M9 2v10" stroke="#d4d4d4" stroke-width="0.7"/></g><rect x="315.8" y="341" width="11" height="11" fill="#fff" stroke="#333" stroke-width="1"/><path d="M318 346.5l2.7 2.8 5-5.5" stroke="#222" stroke-width="1.2" fill="none"/><g transform="translate(2.5 354.5)"><path d="M2.5 1.5h8.5l1 1v10h-8.5l-1-1z" fill="#d2d2d2"/><path d="M2.5 1.5h8.5v10h-8.5z" fill="#dcdcdc"/></g><rect x="315.8" y="356" width="11" height="11" fill="#fff" stroke="#333" stroke-width="1"/><path d="M318 361.5l2.7 2.8 5-5.5" stroke="#222" stroke-width="1.2" fill="none"/><g transform="translate(2.5 369.5)"><path d="M2 1.5l7-1 3 1.5v9l-7 2-3-2z" fill="#e8e8e8" stroke="#888" stroke-width="0.5"/><path d="M3 5.5l5-1v5l-5 1.5z" fill="#2a2a2a"/><circle cx="5" cy="3" r="1" fill="#222"/><circle cx="8.5" cy="2.5" r="0.9" fill="#222"/></g><rect x="315.8" y="371" width="11" height="11" fill="#fff" stroke="#333" stroke-width="1"/><path d="M318 376.5l2.7 2.8 5-5.5" stroke="#222" stroke-width="1.2" fill="none"/><g transform="translate(2.5 384.5)"><path d="M2 1h9l1.5 1v10l-2 1.5h-7l-1.5-1.5z" fill="#c4c4c4"/><path d="M2 1h9v11h-9z" fill="#d0d0d0"/></g><rect x="315.8" y="386" width="11" height="11" fill="#fff" stroke="#333" stroke-width="1"/><path d="M318 391.5l2.7 2.8 5-5.5" stroke="#222" stroke-width="1.2" fill="none"/><g transform="translate(2.5 399.5)"><path d="M8.5 1.5l2.5 0.5-3.5 7.5-4.5 1-2.5 2.5M3 10.5c3 2 6 1.5 8.5-1M3 7.5l4.5 2" stroke="#b8a094" stroke-width="1.3" fill="none"/><path d="M8.5 2l2 0.5-3 6.5-3.5 0.5z" fill="#f0e8e4"/></g><rect x="315.8" y="401" width="11" height="11" fill="#fff" stroke="#333" stroke-width="1"/><path d="M318 406.5l2.7 2.8 5-5.5" stroke="#222" stroke-width="1.2" fill="none"/><g transform="translate(2.5 414.5)"><path d="M0 4L3 2.5H13.5L12 4.5Z" fill="#6a4a2a"/><path d="M0.5 4.5h1.6v6h-1.6zM10.5 4.5h1.6v6h-1.6zM12.3 3.5h1.2v5h-1.2z" fill="#cdb088"/></g><rect x="315.8" y="416" width="11" height="11" fill="#fff" stroke="#333" stroke-width="1"/><path d="M318 421.5l2.7 2.8 5-5.5" stroke="#222" stroke-width="1.2" fill="none"/><g transform="translate(2.5 429.5)"><path d="M5.5 1h4v6h-4z" fill="none" stroke="#c4a484" stroke-width="1.1"/><path d="M4.5 7h6v1.6h-6z" fill="#b89878"/><path d="M5 8.5v4.5M10 8.5v4.5" stroke="#c4a484" stroke-width="1"/></g><rect x="315.8" y="431" width="11" height="11" fill="#fff" stroke="#333" stroke-width="1"/><path d="M318 436.5l2.7 2.8 5-5.5" stroke="#222" stroke-width="1.2" fill="none"/><g transform="translate(2.5 444.5)"><path d="M5.5 1h4v6h-4z" fill="none" stroke="#c4a484" stroke-width="1.1"/><path d="M4.5 7h6v1.6h-6z" fill="#b89878"/><path d="M5 8.5v4.5M10 8.5v4.5" stroke="#c4a484" stroke-width="1"/></g><rect x="315.8" y="446" width="11" height="11" fill="#fff" stroke="#333" stroke-width="1"/><path d="M318 451.5l2.7 2.8 5-5.5" stroke="#222" stroke-width="1.2" fill="none"/></svg>
<div class="th" style="left:3.5px">Наименование</div>
<div class="th" style="left:125px">Ширина</div>
<div class="th" style="left:181px">Глубина</div>
<div class="th" style="left:237px">Высота</div>
<div class="th" style="left:292px">Видимость</div>
<div class="tn" style="top:23px">Фиксированное окно</div>
<div class="tv" style="top:23px;left:120.2px">91</div>
<div class="tv" style="top:23px;left:176.2px">7,5</div>
<div class="tv" style="top:23px;left:232.2px">134</div>
<div class="tn" style="top:38px">Фиксированное окно</div>
<div class="tv" style="top:38px;left:120.2px">91</div>
<div class="tv" style="top:38px;left:176.2px">7,5</div>
<div class="tv" style="top:38px;left:232.2px">134</div>
<div class="tn" style="top:53px">Стекло, пяти окон...</div>
<div class="tv" style="top:53px;left:120.2px">213</div>
<div class="tv" style="top:53px;left:176.2px">17,8</div>
<div class="tv" style="top:53px;left:232.2px">174</div>
<div class="tn" style="top:68px">Скруглённая дверь</div>
<div class="tv" style="top:68px;left:120.2px">91,5</div>
<div class="tv" style="top:68px;left:176.2px">14,5</div>
<div class="tv" style="top:68px;left:232.2px">208,5</div>
<div class="tn" style="top:83px">Ванна</div>
<div class="tv" style="top:83px;left:120.2px">178</div>
<div class="tv" style="top:83px;left:176.2px">77</div>
<div class="tv" style="top:83px;left:232.2px">72</div>
<div class="tn" style="top:98px">Раковина</div>
<div class="tv" style="top:98px;left:120.2px">56</div>
<div class="tv" style="top:98px;left:176.2px">47</div>
<div class="tv" style="top:98px;left:232.2px">97</div>
<div class="tn" style="top:113px">Унитаз</div>
<div class="tv" style="top:113px;left:120.2px">40</div>
<div class="tv" style="top:113px;left:176.2px">80</div>
<div class="tv" style="top:113px;left:232.2px">62</div>
<div class="tn" style="top:128px">Стол, компьютерн...</div>
<div class="tv" style="top:128px;left:120.2px">124</div>
<div class="tv" style="top:128px;left:176.2px">138,5</div>
<div class="tv" style="top:128px;left:232.2px">182</div>
<div class="tn" style="top:143px">Стол, компьютерн...</div>
<div class="tv" style="top:143px;left:120.2px">109</div>
<div class="tv" style="top:143px;left:176.2px">108</div>
<div class="tv" style="top:143px;left:232.2px">171</div>
<div class="tn" style="top:158px">Дверная рама с ар...</div>
<div class="tv" style="top:158px;left:120.2px">80</div>
<div class="tv" style="top:158px;left:176.2px">7,5</div>
<div class="tv" style="top:158px;left:232.2px">200</div>
<div class="tn" style="top:173px">Дверь</div>
<div class="tv" style="top:173px;left:120.2px">91,5</div>
<div class="tv" style="top:173px;left:176.2px">14,5</div>
<div class="tv" style="top:173px;left:232.2px">208,5</div>
<div class="tn" style="top:188px">Дверь</div>
<div class="tv" style="top:188px;left:120.2px">91,5</div>
<div class="tv" style="top:188px;left:176.2px">14,5</div>
<div class="tv" style="top:188px;left:232.2px">208,5</div>
<div class="tn" style="top:203px">Дверь</div>
<div class="tv" style="top:203px;left:120.2px">91,5</div>
<div class="tv" style="top:203px;left:176.2px">14,5</div>
<div class="tv" style="top:203px;left:232.2px">208,5</div>
<div class="tn" style="top:218px">Кровать 140x190</div>
<div class="tv" style="top:218px;left:120.2px">158</div>
<div class="tv" style="top:218px;left:176.2px">208</div>
<div class="tv" style="top:218px;left:232.2px">70</div>
<div class="tn" style="top:233px">Комод</div>
<div class="tv" style="top:233px;left:120.2px">100</div>
<div class="tv" style="top:233px;left:176.2px">55</div>
<div class="tv" style="top:233px;left:232.2px">80</div>
<div class="tn" style="top:248px">Батарея отопления</div>
<div class="tv" style="top:248px;left:120.2px">65</div>
<div class="tv" style="top:248px;left:176.2px">25</div>
<div class="tv" style="top:248px;left:232.2px">61</div>
<div class="tn" style="top:263px">Батарея отопления</div>
<div class="tv" style="top:263px;left:120.2px">65</div>
<div class="tv" style="top:263px;left:176.2px">25</div>
<div class="tv" style="top:263px;left:232.2px">61</div>
<div class="tn" style="top:278px">Батарея отопления</div>
<div class="tv" style="top:278px;left:120.2px">65</div>
<div class="tv" style="top:278px;left:176.2px">25</div>
<div class="tv" style="top:278px;left:232.2px">61</div>
<div class="tn" style="top:293px">Батарея отопления</div>
<div class="tv" style="top:293px;left:120.2px">65</div>
<div class="tv" style="top:293px;left:176.2px">25</div>
<div class="tv" style="top:293px;left:232.2px">61</div>
<div class="tn" style="top:308px">Штора</div>
<div class="tv" style="top:308px;left:120.2px">67</div>
<div class="tv" style="top:308px;left:176.2px">23</div>
<div class="tv" style="top:308px;left:232.2px">225</div>
<div class="tn" style="top:323px">Штора</div>
<div class="tv" style="top:323px;left:120.2px">67</div>
<div class="tv" style="top:323px;left:176.2px">23</div>
<div class="tv" style="top:323px;left:232.2px">225</div>
<div class="tn" style="top:338px">Электрообогрева...</div>
<div class="tv" style="top:338px;left:120.2px">37</div>
<div class="tv" style="top:338px;left:176.2px">10</div>
<div class="tv" style="top:338px;left:232.2px">45</div>
<div class="tn" style="top:353px">Шкаф платяной</div>
<div class="tv" style="top:353px;left:120.2px">100</div>
<div class="tv" style="top:353px;left:176.2px">54</div>
<div class="tv" style="top:353px;left:232.2px">165</div>
<div class="tn" style="top:368px">Кухонная плита</div>
<div class="tv" style="top:368px;left:120.2px">60</div>
<div class="tv" style="top:368px;left:176.2px">62</div>
<div class="tv" style="top:368px;left:232.2px">85</div>
<div class="tn" style="top:383px">Холодильник</div>
<div class="tv" style="top:383px;left:120.2px">60</div>
<div class="tv" style="top:383px;left:176.2px">66</div>
<div class="tv" style="top:383px;left:232.2px">85</div>
<div class="tn" style="top:398px">Кресло</div>
<div class="tv" style="top:398px;left:120.2px">68</div>
<div class="tv" style="top:398px;left:176.2px">83</div>
<div class="tv" style="top:398px;left:232.2px">100</div>
<div class="tn" style="top:413px">Стол, квадратный</div>
<div class="tv" style="top:413px;left:120.2px">115</div>
<div class="tv" style="top:413px;left:176.2px">115</div>
<div class="tv" style="top:413px;left:232.2px">74</div>
<div class="tn" style="top:428px">Стул</div>
<div class="tv" style="top:428px;left:120.2px">40</div>
<div class="tv" style="top:428px;left:176.2px">42</div>
<div class="tv" style="top:428px;left:232.2px">90</div>
<div class="tn" style="top:443px">Стул</div>
<div class="tv" style="top:443px;left:120.2px">40</div>
<div class="tv" style="top:443px;left:176.2px">42</div>
<div class="tv" style="top:443px;left:232.2px">90</div>
<div id="tbcorner"></div>
<div id="tbsb"><div id="tbsbthumb"></div><svg class="abs" style="left:0;top:0" width="17" height="436"><path d="M5 10.5l3.5-3.5 3.5 3.5" stroke="#505050" stroke-width="1.4" fill="none"/><path d="M5 423.5l3.5 3.5 3.5-3.5" stroke="#505050" stroke-width="1.4" fill="none"/></svg></div>
</div><div id="plan"></div>
<svg id="plansvg" class="abs" style="left:383px;top:68px" width="815" height="395" viewBox="383 68 815 395">
<rect x="383" y="68" width="815" height="395" fill="#fff"/>
<path d="M420.63 85V464M439.72 85V464M458.81 85V464M496.99 85V464M516.08 85V464M535.17 85V464M573.35 85V464M592.44 85V464M611.53 85V464M649.71 85V464M668.8 85V464M687.89 85V464M726.07 85V464M745.16 85V464M764.25 85V464M802.43 85V464M821.52 85V464M840.61 85V464M878.79 85V464M897.88 85V464M916.97 85V464M955.15 85V464M974.24 85V464M993.33 85V464M1031.51 85V464M1050.6 85V464M1069.69 85V464M1107.87 85V464M1126.96 85V464M1146.05 85V464M400 95.51H1183M400 133.69H1183M400 152.78H1183M400 171.87H1183M400 210.05H1183M400 229.14H1183M400 248.23H1183M400 286.41H1183M400 305.5H1183M400 324.59H1183M400 362.77H1183M400 381.86H1183M400 400.95H1183M400 439.13H1183M400 458.22H1183" stroke="#b2b2b2" stroke-width="0.9" fill="none"/><path d="M401.54 85V464M477.9 85V464M554.26 85V464M630.62 85V464M706.98 85V464M783.34 85V464M859.7 85V464M936.06 85V464M1012.42 85V464M1088.78 85V464M1165.14 85V464M400 114.6H1183M400 190.96H1183M400 267.32H1183M400 343.68H1183M400 420.04H1183" stroke="#8e8e8e" stroke-width="1.5" fill="none"/>
<defs><pattern id="fl" x="544.63" y="154.63" width="26.74" height="26.74" patternUnits="userSpaceOnUse"><rect width="26.74" height="26.74" fill="#e0d5ca"/><rect x="0.4" y="0.4" width="12.57" height="12.57" fill="#d6c6b8"/><rect x="13.77" y="0.4" width="12.57" height="12.57" fill="#cfc8c3"/><rect x="0.4" y="13.77" width="12.57" height="12.57" fill="#d2c9c2"/><rect x="13.77" y="13.77" width="12.57" height="12.57" fill="#d8c6b6"/><path d="M-3.2 0L0 -3.2L3.2 0L0 3.2Z" fill="#4b4642"/><path d="M10.17 0L13.37 -3.2L16.57 0L13.37 3.2Z" fill="#4b4642"/><path d="M23.54 0L26.74 -3.2L29.94 0L26.74 3.2Z" fill="#4b4642"/><path d="M-3.2 13.37L0 10.17L3.2 13.37L0 16.57Z" fill="#4b4642"/><path d="M10.17 13.37L13.37 10.17L16.57 13.37L13.37 16.57Z" fill="#4b4642"/><path d="M23.54 13.37L26.74 10.17L29.94 13.37L26.74 16.57Z" fill="#4b4642"/><path d="M-3.2 26.74L0 23.54L3.2 26.74L0 29.94Z" fill="#4b4642"/><path d="M10.17 26.74L13.37 23.54L16.57 26.74L13.37 29.94Z" fill="#4b4642"/><path d="M23.54 26.74L26.74 23.54L29.94 26.74L26.74 29.94Z" fill="#4b4642"/></pattern><pattern id="hatch" width="5" height="5" patternUnits="userSpaceOnUse" patternTransform="rotate(-20)"><rect width="5" height="5" fill="#ececec"/><rect width="2.6" height="5" fill="#6e6e6e"/></pattern><pattern id="hatchv" width="5" height="5" patternUnits="userSpaceOnUse" patternTransform="rotate(70)"><rect width="5" height="5" fill="#ececec"/><rect width="2.6" height="5" fill="#6e6e6e"/></pattern><radialGradient id="tub" cx="0.5" cy="0.5" r="0.6"><stop offset="0" stop-color="#f4f4f4"/><stop offset="0.6" stop-color="#c4c4c4"/><stop offset="1" stop-color="#9a9a9a"/></radialGradient></defs><path d="M555.4 154.6H936.2V340.6H780.8V381.8H555.4Z" fill="url(#fl)"/><path d="M598.7 154.8H652V201.5H637V190L622 171.5L599 170Z" fill="#b4663a"/><rect x="652" y="154.8" width="44.2" height="44" fill="#a65e16"/><path d="M610.7 187L621.5 198L610.7 209.5L600 198Z" fill="#924a0e"/><path d="M656 212H672L681 232H696.6V252.8H656Z" fill="#b4663a"/><path d="M676.5 217.5L691.5 210.5L697.5 224.5L683.5 231.5Z" fill="#924a0e"/><rect x="657.3" y="256.8" width="38.4" height="19.8" fill="#8e480e"/><rect x="629" y="256.8" width="22.5" height="21.8" fill="#f6f6f6"/><circle cx="634.8" cy="262" r="3.9" fill="#0a0a0a"/><circle cx="646" cy="262" r="3" fill="#0a0a0a"/><path d="M633 273l3 1.5M645 273.5l3 1" stroke="#444" stroke-width="0.8"/><rect x="627.3" y="344" width="24" height="22.2" fill="#f4f4f4"/><rect x="774.2" y="257" width="38.2" height="19.4" fill="#f2f2f2"/><rect x="856.6" y="259.3" width="78.8" height="60.2" fill="#eaa93a"/><rect x="859.4" y="262" width="73.2" height="54.4" fill="#f6d598"/><rect x="867.8" y="155.4" width="67.6" height="29" fill="#f0f0f0" stroke="#999" stroke-width="0.6"/><rect x="872.5" y="158.5" width="57" height="22.5" rx="11" ry="11" fill="url(#tub)"/><ellipse cx="927.2" cy="215.6" rx="8.3" ry="10.3" fill="#f4f4f4" stroke="#aaa" stroke-width="0.8"/><ellipse cx="925.8" cy="215.6" rx="5.4" ry="7.2" fill="#e2e2e2"/><rect x="826" y="244" width="14.6" height="8.4" rx="2" fill="#f2f2f2" stroke="#bbb" stroke-width="0.5"/><ellipse cx="833.3" cy="233.5" rx="7" ry="11.5" fill="#f0f0f0" stroke="#bbb" stroke-width="0.6"/><ellipse cx="833.3" cy="232" rx="3.6" ry="6.5" fill="#d8d8d8"/><rect x="754.3" y="345.4" width="26.2" height="32" fill="#a85c30"/><rect x="758.4" y="346.2" width="17.6" height="30" fill="#f7e6c0"/><rect x="555.4" y="198.7" width="8.8" height="23.5" fill="#d4d8dc" stroke="#a8a8a8" stroke-width="0.7"/><rect x="555.4" y="310.7" width="8.8" height="24.6" fill="#d4d8dc" stroke="#a8a8a8" stroke-width="0.7"/><rect x="710.3" y="155" width="24.4" height="9.6" fill="#d4d8dc" stroke="#a8a8a8" stroke-width="0.7"/><rect x="702.5" y="372.6" width="24" height="8.8" fill="#d4d8dc" stroke="#a8a8a8" stroke-width="0.7"/><rect x="684" y="372.6" width="17.5" height="8.8" fill="#d9cdb4" stroke="#b0a68e" stroke-width="0.7"/><rect x="727.5" y="372.6" width="11.4" height="8.8" fill="#d9cdb4" stroke="#b0a68e" stroke-width="0.7"/><rect x="820" y="337.2" width="81" height="1.6" fill="#b9b2a6"/><rect x="833" y="155" width="13.5" height="3" fill="#f0f0f0" stroke="#aaa" stroke-width="0.5"/><rect x="552.2" y="151.4" width="387.2" height="3.2" fill="url(#hatch)" stroke="#0a0a0a" stroke-width="1.1"/><rect x="552.2" y="151.4" width="3.2" height="233.6" fill="url(#hatchv)" stroke="#0a0a0a" stroke-width="1.1"/><rect x="936.2" y="151.4" width="3.2" height="192.4" fill="url(#hatchv)" stroke="#0a0a0a" stroke-width="1.1"/><rect x="552.2" y="381.8" width="231.8" height="3.2" fill="url(#hatch)" stroke="#0a0a0a" stroke-width="1.1"/><rect x="780.8" y="340.6" width="3.2" height="44.4" fill="url(#hatchv)" stroke="#0a0a0a" stroke-width="1.1"/><rect x="780.8" y="340.6" width="158.6" height="3.2" fill="url(#hatch)" stroke="#0a0a0a" stroke-width="1.1"/><rect x="552.2" y="253.1" width="387.2" height="3.2" fill="url(#hatch)" stroke="#0a0a0a" stroke-width="1.1"/><rect x="652" y="199" width="3.2" height="186" fill="url(#hatchv)" stroke="#0a0a0a" stroke-width="1.1"/><rect x="813.4" y="151.4" width="3.2" height="192.4" fill="url(#hatchv)" stroke="#0a0a0a" stroke-width="1.1"/><rect x="702" y="151.4" width="34.4" height="3.2" fill="#fff" stroke="#111" stroke-width="0.8"/><rect x="694.7" y="381.8" width="34.6" height="3.2" fill="#fff" stroke="#111" stroke-width="0.8"/><rect x="820" y="340.6" width="81.3" height="3.2" fill="#fff" stroke="#111" stroke-width="0.8"/><rect x="567.3" y="253.1" width="34.7" height="3.2" fill="#fff" stroke="#111" stroke-width="0.8"/><rect x="724" y="253.1" width="30" height="3.2" fill="#fff" stroke="#111" stroke-width="0.8"/><rect x="813.4" y="165.7" width="3.2" height="31" fill="#fff" stroke="#111" stroke-width="0.8"/><rect x="813.4" y="282.6" width="3.2" height="31" fill="#fff" stroke="#111" stroke-width="0.8"/><rect x="652" y="305.6" width="3.2" height="30.8" fill="#fff" stroke="#111" stroke-width="0.8"/><rect x="594.5" y="381.8" width="32" height="3.2" fill="#fff" stroke="#111" stroke-width="0.8"/><rect x="552.2" y="198.7" width="3.2" height="23.5" fill="#fff" stroke="#111" stroke-width="0.8"/><rect x="552.2" y="310.7" width="3.2" height="24.6" fill="#fff" stroke="#111" stroke-width="0.8"/><path d="M568.4 256.5V287.6A31 31 0 0 0 599.6 256.5" stroke="#222" stroke-width="1.1" fill="none"/><path d="M652 305.6H621.3A30.7 30.7 0 0 0 652 336.3" stroke="#222" stroke-width="1.1" fill="none"/><path d="M813.4 165.7H781.6A31.4 31.4 0 0 0 813.4 196.8" stroke="#222" stroke-width="1.1" fill="none"/><path d="M813.4 282.6H781.6A31.4 31.4 0 0 0 813.4 313.8" stroke="#222" stroke-width="1.1" fill="none"/><path d="M594.6 385V415.8A31.6 31.6 0 0 0 626.4 385" stroke="#222" stroke-width="1.1" fill="none"/><text x="745" y="268.5" font-size="8.6" text-anchor="middle" fill="#222">56,18 м²</text><path d="M553.6 124.6L937.6 124.6" stroke="#1a1a1a" stroke-width="1.3" fill="none"/><path d="M551.1 127.1L556.1 122.1" stroke="#111" stroke-width="1" fill="none"/><path d="M935.1 127.1L940.1 122.1" stroke="#111" stroke-width="1" fill="none"/><text x="745.5" y="121" font-size="6.5" text-anchor="middle" fill="#222">1 002</text><path d="M553.6 140L652.6 140" stroke="#1a1a1a" stroke-width="1.3" fill="none"/><path d="M551.1 142.5L556.1 137.5" stroke="#111" stroke-width="1" fill="none"/><path d="M650.1 142.5L655.1 137.5" stroke="#111" stroke-width="1" fill="none"/><text x="603" y="137" font-size="6.5" text-anchor="middle" fill="#222">260</text><path d="M487.6 152.8L487.6 383.4" stroke="#1a1a1a" stroke-width="1.3" fill="none"/><path d="M485.1 155.3L490.1 150.3" stroke="#111" stroke-width="1" fill="none"/><path d="M485.1 385.9L490.1 380.9" stroke="#111" stroke-width="1" fill="none"/><text transform="translate(485.5 267.5) rotate(-90)" font-size="6.5" text-anchor="middle" fill="#222">601</text><path d="M523.4 152.8L523.4 253.8" stroke="#1a1a1a" stroke-width="1.3" fill="none"/><path d="M520.9 155.3L525.9 150.3" stroke="#111" stroke-width="1" fill="none"/><path d="M520.9 256.3L525.9 251.3" stroke="#111" stroke-width="1" fill="none"/><text transform="translate(521.2 202.5) rotate(-90)" font-size="6.5" text-anchor="middle" fill="#222">262</text><path d="M957.8 152.8L957.8 253.8" stroke="#1a1a1a" stroke-width="1.3" fill="none"/><path d="M955.3 155.3L960.3 150.3" stroke="#111" stroke-width="1" fill="none"/><path d="M955.3 256.3L960.3 251.3" stroke="#111" stroke-width="1" fill="none"/><text transform="translate(960.2 202.5) rotate(90)" font-size="6.5" text-anchor="middle" fill="#222">263</text><path d="M972.2 152.8L972.2 343" stroke="#1a1a1a" stroke-width="1.3" fill="none"/><path d="M969.7 155.3L974.7 150.3" stroke="#111" stroke-width="1" fill="none"/><path d="M969.7 345.5L974.7 340.5" stroke="#111" stroke-width="1" fill="none"/><text transform="translate(974.6 246) rotate(90)" font-size="6.5" text-anchor="middle" fill="#222">496</text><path d="M553.8 432.4L783.8 432.4" stroke="#1a1a1a" stroke-width="1.3" fill="none"/><path d="M551.3 434.9L556.3 429.9" stroke="#111" stroke-width="1" fill="none"/><path d="M781.3 434.9L786.3 429.9" stroke="#111" stroke-width="1" fill="none"/><text x="668.5" y="440.6" font-size="6.5" text-anchor="middle" fill="#222">600</text><path d="M814.4 376.8L937.2 376.8" stroke="#1a1a1a" stroke-width="1.3" fill="none"/><path d="M811.9 379.3L816.9 374.3" stroke="#111" stroke-width="1" fill="none"/><path d="M934.7 379.3L939.7 374.3" stroke="#111" stroke-width="1" fill="none"/><text x="876" y="384.6" font-size="6.5" text-anchor="middle" fill="#222">324</text><path d="M807.4 343.6L807.4 383.4" stroke="#1a1a1a" stroke-width="1.3" fill="none"/><path d="M804.9 346.1L809.9 341.1" stroke="#111" stroke-width="1" fill="none"/><path d="M804.9 385.9L809.9 380.9" stroke="#111" stroke-width="1" fill="none"/><text transform="translate(814.6 363.5) rotate(-90)" font-size="6.5" text-anchor="middle" fill="#222">106</text><path d="M553.6 124.6V151" stroke="#111" stroke-width="1.1" fill="none"/><path d="M937.6 124.6V151" stroke="#111" stroke-width="1.1" fill="none" stroke-dasharray="7 3"/><path d="M652.6 140V151" stroke="#111" stroke-width="1.1" fill="none"/><path d="M487.6 152.8H552" stroke="#111" stroke-width="1.1" fill="none" stroke-dasharray="7 3"/><path d="M523.4 253.8H552" stroke="#111" stroke-width="1.1" fill="none" stroke-dasharray="7 3"/><path d="M487.6 383.4H552" stroke="#111" stroke-width="1.1" fill="none" stroke-dasharray="7 3"/><path d="M939.5 152.8H972.2" stroke="#111" stroke-width="1.1" fill="none" stroke-dasharray="7 3"/><path d="M939.5 253.8H957.8" stroke="#111" stroke-width="1.1" fill="none" stroke-dasharray="7 3"/><path d="M939.5 343H972.2" stroke="#111" stroke-width="1.1" fill="none" stroke-dasharray="7 3"/><path d="M553.8 385V432.4" stroke="#111" stroke-width="1.1" fill="none"/><path d="M783.8 385V432.4" stroke="#111" stroke-width="1.1" fill="none" stroke-dasharray="7 3"/><path d="M814.4 344V376.8" stroke="#111" stroke-width="1.1" fill="none"/><path d="M937.2 344V376.8" stroke="#111" stroke-width="1.1" fill="none" stroke-dasharray="7 3"/><path d="M784 383.4H807.4" stroke="#111" stroke-width="1.1" fill="none" stroke-dasharray="7 3"/>
<circle cx="439.7" cy="133.7" r="19.1" fill="none" stroke="#555" stroke-width="0.8"/><path d="M416.59999999999997 133.7h8M454.8 133.7h8M439.7 148.79999999999998v8M438.2 133.7h3M439.7 132.2v3" stroke="#555" stroke-width="0.7" fill="none"/><path d="M439.7 115.19999999999999L445.5 151.7L439.7 146.2L433.9 151.7Z" fill="none" stroke="#111" stroke-width="1.5" stroke-linejoin="miter"/><text x="439.7" y="113.19999999999999" font-size="9.5" font-weight="bold" text-anchor="middle" fill="#111">N</text>
<rect x="383" y="68" width="800" height="17" fill="#eeeeee"/><rect x="383" y="68" width="17.5" height="396" fill="#eeeeee"/><rect x="383" y="68" width="17.5" height="17" fill="#f4f4f4"/><path d="M400.5 84.5H1183" stroke="#8c8c8c" stroke-width="1.4" fill="none"/><path d="M400.5 85V464" stroke="#b0b0b0" stroke-width="1.6" fill="none"/><text x="405.04" y="80" font-size="11.5" fill="#111">-2</text><text x="481.4" y="80" font-size="11.5" fill="#111">0м</text><text x="557.76" y="80" font-size="11.5" fill="#111">2</text><text x="634.12" y="80" font-size="11.5" fill="#111">4</text><text x="710.48" y="80" font-size="11.5" fill="#111">6</text><text x="786.84" y="80" font-size="11.5" fill="#111">8</text><text x="863.2" y="80" font-size="11.5" fill="#111">10</text><text x="939.56" y="80" font-size="11.5" fill="#111">12</text><text x="1015.92" y="80" font-size="11.5" fill="#111">14</text><text x="1092.28" y="80" font-size="11.5" fill="#111">16</text><text x="1168.64" y="80" font-size="11.5" fill="#111">18</text><text transform="translate(395.5 118.1) rotate(-90)" font-size="11.5" fill="#111" text-anchor="end">0м</text><text transform="translate(395.5 194.46) rotate(-90)" font-size="11.5" fill="#111" text-anchor="end">2</text><text transform="translate(395.5 270.82) rotate(-90)" font-size="11.5" fill="#111" text-anchor="end">4</text><text transform="translate(395.5 347.18) rotate(-90)" font-size="11.5" fill="#111" text-anchor="end">6</text><text transform="translate(395.5 423.54) rotate(-90)" font-size="11.5" fill="#111" text-anchor="end">8</text><path d="M420.63 82V85.5M439.72 82V85.5M458.81 82V85.5M496.99 82V85.5M516.08 82V85.5M535.17 82V85.5M573.35 82V85.5M592.44 82V85.5M611.53 82V85.5M649.71 82V85.5M668.8 82V85.5M687.89 82V85.5M726.07 82V85.5M745.16 82V85.5M764.25 82V85.5M802.43 82V85.5M821.52 82V85.5M840.61 82V85.5M878.79 82V85.5M897.88 82V85.5M916.97 82V85.5M955.15 82V85.5M974.24 82V85.5M993.33 82V85.5M1031.51 82V85.5M1050.6 82V85.5M1069.69 82V85.5M1107.87 82V85.5M1126.96 82V85.5M1146.05 82V85.5M398 95.51H401M398 133.69H401M398 152.78H401M398 171.87H401M398 210.05H401M398 229.14H401M398 248.23H401M398 286.41H401M398 305.5H401M398 324.59H401M398 362.77H401M398 381.86H401M398 400.95H401M398 439.13H401M398 458.22H401" stroke="#333" stroke-width="0.8" fill="none"/><path d="M401.54 68.5V85M477.9 68.5V85M554.26 68.5V85M630.62 68.5V85M706.98 68.5V85M783.34 68.5V85M859.7 68.5V85M936.06 68.5V85M1012.42 68.5V85M1088.78 68.5V85M1165.14 68.5V85M383.5 114.6H400.5M383.5 190.96H400.5M383.5 267.32H400.5M383.5 343.68H400.5M383.5 420.04H400.5" stroke="#1a1a1a" stroke-width="1.6" fill="none"/><path d="M387.5 76.5v-2.5a2.6 2.6 0 0 1 5.2 0v1" stroke="#8a8a9a" stroke-width="1.6" fill="none"/><rect x="388.2" y="76.2" width="10.6" height="7.6" rx="1" fill="#ecdc3c" stroke="#b8a820" stroke-width="0.8"/>
<rect x="1183" y="68" width="15" height="396" fill="#f0f0f0"/><rect x="1183" y="145" width="15" height="267" fill="#cdcdcd"/><path d="M1187 98.5l3.5-3.5 3.5 3.5" stroke="#505050" stroke-width="1.4" fill="none"/><path d="M1187 450.5l3.5 3.5 3.5-3.5" stroke="#505050" stroke-width="1.4" fill="none"/>
</svg><div id="v3d">
<svg id="v3dsvg" width="819" height="463" viewBox="381 469 819 463">
<defs><linearGradient id="grass" x1="0" y1="0" x2="0" y2="1"><stop offset="0" stop-color="#787f29"/><stop offset="0.5" stop-color="#79822a"/><stop offset="1" stop-color="#7b872a"/></linearGradient><filter id="gnoise" x="0" y="0" width="100%" height="100%" color-interpolation-filters="sRGB"><feTurbulence type="fractalNoise" baseFrequency="0.22 0.4" numOctaves="2" seed="7" result="n"/><feColorMatrix type="matrix" values="0 0 0 0 0.55  0 0 0 0 0.6  0 0 0 0 0.23  1.6 0 0 0 -0.52"/></filter><pattern id="f3" x="735.3" y="743.5" width="16" height="14.35" patternUnits="userSpaceOnUse"><rect width="16" height="14.35" fill="#c9b3a3"/><rect x="0" y="0" width="16" height="5" fill="#c0b2aa" opacity="0.7"/><rect x="0" y="9.5" width="16" height="4.85" fill="#cdb39e" opacity="0.7"/><path d="M8 4.2L11.6 7.2L8 10.2L4.4 7.2Z" fill="#17120f"/></pattern><pattern id="f3b" x="597.8" y="635.1" width="13.4" height="9.4" patternUnits="userSpaceOnUse"><rect width="13.4" height="9.4" fill="#c8b3a4"/><rect y="0" width="13.4" height="3" fill="#bfb3ac" opacity="0.7"/><path d="M6.7 2.8L9.8 4.7L6.7 6.6L3.6 4.7Z" fill="#17120f"/></pattern><pattern id="f3k" x="734.1" y="746.1" width="16" height="14.2" patternUnits="userSpaceOnUse"><rect width="16" height="14.2" fill="#c9b3a3"/><rect x="0" y="0" width="16" height="5" fill="#c0b2aa" opacity="0.7"/><rect x="0" y="9.5" width="16" height="4.7" fill="#cdb39e" opacity="0.7"/><path d="M8 4.2L11.6 7.2L8 10.2L4.4 7.2Z" fill="#17120f"/></pattern><linearGradient id="sal" x1="0" y1="0" x2="0" y2="1"><stop offset="0" stop-color="#cd9d78"/><stop offset="1" stop-color="#ca9a78"/></linearGradient></defs>
<rect x="381" y="469" width="819" height="463" fill="url(#grass)"/>
<rect x="381" y="469" width="819" height="463" fill="#888c34" filter="url(#gnoise)" opacity="0.75"/>
<path d="M558 556L1017 552L1074 747L846 750L850 808L495 811Z" fill="#b4b4b4"/><path d="M586 629L1000 626L1000 648L585 648Z" fill="url(#f3b)"/><path d="M568 719L1040 715L1072 747L848 750L848 808L560 808Z" fill="url(#f3)"/><path d="M568 719L660 719L655 808L560 808Z" fill="url(#f3k)"/><path d="M559.5 557L1017 553L996.5 609L990 628L587 629.5Z" fill="#d9d9d9"/><path d="M559.5 557L587 629.5L585 650L537 650Z" fill="#a9a9aa"/><path d="M553 603L571.5 641L569.5 650L550 650L547 632Z" fill="#f4f4f4"/><path d="M553.5 609L568.5 641L567 649L552 649L549 633Z" fill="#8f9f5c"/><path d="M679.5 557L690 609L690 648L670 648Z" fill="#a9a9aa"/><path d="M676.5 555.5L679.8 555.5L670.5 649L665.5 649Z" fill="#fcfcfc"/><path d="M870.4 557L860.3 647.5L881 647.5Z" fill="#a9a9aa"/><path d="M870.4 553L874.4 553L886 650L881.3 650Z" fill="#fcfcfc"/><path d="M1017 553L1044 646L1000 646L996.5 609Z" fill="#a9a9aa"/><path d="M739 562.5L779 562.5L779.5 605L741.5 605Z" fill="#f4f4ee"/><path d="M741 564.5L777 564.5L777 601.5L743.5 601.5Z" fill="#9cab6e"/><rect x="750.5" y="608" width="26.5" height="21" fill="#ececec"/><path d="M752 609v19M755 609v19M758 609v19M761 609v19M764 609v19M767 609v19M770 609v19M773 609v19M776 609v19" stroke="#fdfdfd" stroke-width="1.5"/><rect x="688.2" y="608.7" width="46.8" height="39.5" fill="#d87c1e"/><rect x="680" y="633" width="13" height="15.5" fill="#f0a458"/><path d="M617.5 578L672.5 578L672 592L617 592Z" fill="#f0a050"/><path d="M617 592L672 592L671 604L623 604Z" fill="#95501f"/><path d="M643 598L658 598L660 604L641 604Z" fill="#f0a050"/><path d="M623 604L646 604L648 618L628 618Z" fill="#95501f"/><path d="M628 606L644 606L646 616L627 616Z" fill="#f0a050"/><path d="M648.4 607.5L669.8 608.2L667.1 635L653.2 628.5Z" fill="#f2a456"/><path d="M624 644L634 646L645 644.5L643 649.5L627 649.5Z" fill="#b4521c"/><path d="M628 618L648 618L655 642L634 642Z" fill="#95501f"/><path d="M636 628L650 628L652.5 641L634 641Z" fill="#f0a050"/><rect x="922" y="609.7" width="78" height="36.6" fill="#f2f2f2"/><rect x="926" y="612" width="70" height="17" rx="7" fill="#fafafa" stroke="#e4e4e4" stroke-width="1"/><rect x="922" y="632" width="78" height="14.5" fill="#ebebeb"/><rect x="884" y="610" width="15" height="6.5" fill="#f6f6f6"/><path d="M536 654L1044 648L1018 712L883 716L668 718L569 720Z" fill="#d9d9d9"/><path d="M559 666L605 666L623 720L577 720Z" fill="#e9e9e9"/><ellipse cx="609" cy="695" rx="3" ry="1.5" fill="#eaeab8"/><path d="M763.5 718V678Q763.5 666.5 782.3 666.5Q801 666.5 801 678V718Z" fill="url(#f3)"/><path d="M535 651.5L1044.5 645.5L1045.5 648.8L534.5 654.6Z" fill="#fbfbfb"/><path d="M537 654L570 720L561 808L496 809Z" fill="#a9a9aa"/><path d="M525.5 722L548.5 753L540.5 792L536 790L517 760.5Z" fill="#eeeeee"/><path d="M525.5 726.5L546 754L538.5 788.5L518 760Z" fill="#8c955e"/><path d="M550.5 760.5L561 761.5L567 772L566 795L557.5 800L546 786Z" fill="#f3f3f3"/><path d="M669.5 654L683 719L679.5 760L677.5 806L654 806L660 760Z" fill="#a9acae"/><path d="M667.5 720L680 765L678 800" stroke="#e6e6e6" stroke-width="1.2" fill="none"/><path d="M665.8 652L669.8 652L665.4 690L658.7 765L655 806L650.5 806L654.2 765L661.2 690Z" fill="#fafafa"/><path d="M647.5 697.5L661.7 697.5L660.5 722L657 742L651 742L647.8 722Z" fill="#f4f4f4"/><ellipse cx="655.8" cy="705.4" rx="4.2" ry="4.6" fill="#151515"/><circle cx="654.5" cy="717" r="1.3" fill="#8a8a8a"/><path d="M636 797L654 797L653.5 807.5L635 807.5Z" fill="#f6f6f6"/><path d="M684.5 700.8L732 700.8L733 721.3L684 721.3Z" fill="#cd711e"/><path d="M684 721.3L733 721.3L732.5 740L686 740Z" fill="#96500f"/><path d="M684 725h49M684.5 730h48.5M685 735h48" stroke="#7e4008" stroke-width="0.8"/><path d="M826 676L876.5 676L877 697L825 697Z" fill="#fbfbfb"/><path d="M825 697L877 697L874 737L825 737Z" fill="#e9e9eb"/><path d="M883 655L870 746L893.5 746Z" fill="#a9a9aa"/><path d="M881.5 651L886.5 651L898 749L893 749Z" fill="#fbfbfb"/><path d="M1043 650L1071.5 746L1024.5 746L1018 701Z" fill="#a9a9aa"/><path d="M925.8 710.5L1012.7 710.5L1022.8 746L929.4 746Z" fill="#fcf8c6"/><path d="M921.5 710L925.5 708.5L931 746L926.5 746Z" fill="#f0c818"/><path d="M1010.5 709L1015.5 703.5L1026.5 746L1021 746Z" fill="#f0c818"/><path d="M923 709.5L1013 709.5" stroke="#ecd84c" stroke-width="1.5" fill="none"/><path d="M845 751L1076 749L1034.6 807L850 810Z" fill="url(#sal)"/><path d="M901.2 760L1017.3 759.4L994.8 798.7L890.6 800Z" fill="#c9c7c6"/><path d="M930 770L1008 769L1004 776L928 777Z" fill="#eee0a0"/><path d="M893 792.4L998 791L994.8 798.7L890.6 800Z" fill="#eda566"/><path d="M897 779L1003 777.8L1001 783L896 784Z" fill="#e4b896"/><path d="M900 767L1012 765.5L1010 769.5L899 770.5Z" fill="#e4b896"/><ellipse cx="904" cy="763.5" rx="3" ry="2" fill="#74808e"/><ellipse cx="919" cy="763" rx="3" ry="2" fill="#74808e"/><ellipse cx="906" cy="777" rx="3" ry="2" fill="#74808e"/><ellipse cx="922" cy="776.5" rx="3" ry="2" fill="#74808e"/><ellipse cx="938" cy="778" rx="3" ry="2" fill="#74808e"/><ellipse cx="954" cy="778" rx="3" ry="2" fill="#74808e"/><ellipse cx="969" cy="777.5" rx="3" ry="2" fill="#74808e"/><ellipse cx="986" cy="777" rx="3" ry="2" fill="#74808e"/><ellipse cx="907" cy="790" rx="3" ry="2" fill="#74808e"/><ellipse cx="940" cy="790" rx="3" ry="2" fill="#74808e"/><ellipse cx="956" cy="790" rx="3" ry="2" fill="#74808e"/><ellipse cx="973" cy="789.5" rx="3" ry="2" fill="#74808e"/><ellipse cx="989" cy="789" rx="3" ry="2" fill="#74808e"/><path d="M901.2 760L1017.3 759.4L994.8 798.7L890.6 800L901.2 760" stroke="#a8643a" stroke-width="1.6" fill="none"/><path d="M1014 761L992 798" stroke="#a8643a" stroke-width="2.4" fill="none"/><path d="M931.2 770L921.2 796.2" stroke="#a8643a" stroke-width="1.6" fill="none"/><path d="M977.3 763.7L965.5 796.2" stroke="#a8643a" stroke-width="1.6" fill="none"/><path d="M899 770.3L1009 769" stroke="#b4703e" stroke-width="1.2" fill="none"/><path d="M895 784L1001 782.8" stroke="#b4703e" stroke-width="1.2" fill="none"/><path d="M931 771q5-9 16-10.5q7 7 14 8q8-4 12-7q6 2 5 9" stroke="#a8643a" stroke-width="1.2" fill="none"/><path d="M843.5 749L1074 746.2L1076.5 749.6L844.5 752.2Z" fill="#f8f2da"/><path d="M838.5 752L844.5 752L846 806L840 806Z" fill="#a4a8ac"/><path d="M843.5 749L846.7 749L850.5 809L847 809Z" fill="#fbf9f2"/><path d="M493 812.5L851.5 808.5L842 860.5L539 864.5Z" fill="url(#sal)"/><path d="M563.3 822.8L616.4 822.8L638.4 864L592 864Z" fill="#e3e3e3"/><ellipse cx="620" cy="847.5" rx="2.5" ry="1.2" fill="#d8d060"/><path d="M716.6 817.7L770.7 817.7L770.7 846.2L722.5 846.2Z" fill="#f6f6f6"/><path d="M719.5 819.8L768.5 819.8L768.5 843.5L724.5 843.5Z" fill="#dedede"/><rect x="733" y="833" width="26" height="8" fill="#f0f0f0"/><path d="M740.5 821.5l5 3.5-5 3.5-5-3.5z" fill="#8a8684"/><path d="M702 800v6M709.5 800v6M717 799v7M726 799v7M759 798v8M767 798v8M774.5 798v8" stroke="#f4f0e8" stroke-width="2"/><rect x="737" y="801" width="18" height="5.5" fill="#ecd8c8"/><path d="M492 809.5L851 805.8L851.5 809L493 813Z" fill="#f8f2da"/><path d="M558 555.5L494.3 811" stroke="#f8f2da" stroke-width="3.3" fill="none"/><path d="M556.5 554.3L1018.5 550.5" stroke="#f8f2da" stroke-width="2.6" fill="none"/><path d="M1019 551.5L1073.8 748.5" stroke="#f8f2da" stroke-width="4" fill="none"/>
<circle cx="411.5" cy="501" r="25" fill="#7f9030" fill-opacity="0.35" stroke="#1c2408" stroke-width="1.5"/><g transform="translate(411.5 501) rotate(0)"><path d="M0 -22.5L5.5 -16H2.8V-10.5H-2.8V-16H-5.5Z" fill="#86d64a" stroke="#c6f09a" stroke-width="1"/></g><g transform="translate(411.5 501) rotate(90)"><path d="M0 -22.5L5.5 -16H2.8V-10.5H-2.8V-16H-5.5Z" fill="#86d64a" stroke="#c6f09a" stroke-width="1"/></g><g transform="translate(411.5 501) rotate(180)"><path d="M0 -22.5L5.5 -16H2.8V-10.5H-2.8V-16H-5.5Z" fill="#86d64a" stroke="#c6f09a" stroke-width="1"/></g><g transform="translate(411.5 501) rotate(270)"><path d="M0 -22.5L5.5 -16H2.8V-10.5H-2.8V-16H-5.5Z" fill="#86d64a" stroke="#c6f09a" stroke-width="1"/></g><path d="M411.5 493.5L418 501L411.5 508.5L405 501Z" fill="#6eb83c" stroke="#9ad860" stroke-width="0.8"/>
<text transform="translate(1107 919.5) scale(0.74 1)" font-size="30" fill="#b08c66" fill-opacity="0.32" stroke="#b08c66" stroke-opacity="0.32" stroke-width="1">Koruf.ru</text>
<rect x="382.4" y="470.4" width="816.2" height="460.2" fill="none" stroke="#5a8eae" stroke-width="2.8"/>
</svg></div>
</div>
</body></html>
